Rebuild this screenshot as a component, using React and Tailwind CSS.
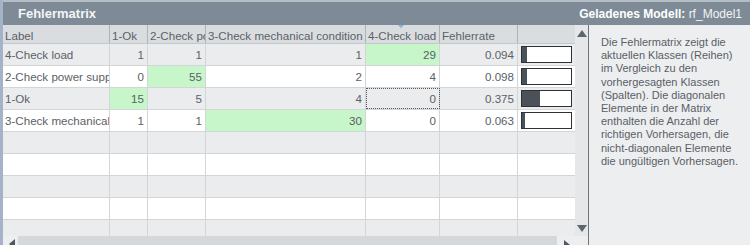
import React from "react";

const cols = [
  { w: "w-[107px]", label: "Label" },
  { w: "w-[38px]", label: "1-Ok" },
  { w: "w-[58px]", label: "2-Check power supply" },
  { w: "w-[160px]", label: "3-Check mechanical condition" },
  { w: "w-[74px]", label: "4-Check load" },
  { w: "w-[78px]", label: "Fehlerrate" },
  { w: "w-[57px]", label: "" },
];

const rows = [
  { label: "4-Check load", v: [1, 1, 1, 29], green: 3, rate: "0.094", r: 0.094 },
  { label: "2-Check power supply", v: [0, 55, 2, 4], green: 1, rate: "0.098", r: 0.098 },
  { label: "1-Ok", v: [15, 5, 4, 0], green: 0, rate: "0.375", r: 0.375, focus: 3 },
  { label: "3-Check mechanical condition", v: [1, 1, 30, 0], green: 2, rate: "0.063", r: 0.063 },
  null,
  null,
  null,
  null,
  null,
];

const lines = [
  "Die Fehlermatrix zeigt die",
  "aktuellen Klassen (Reihen)",
  "im Vergleich zu den",
  "vorhergesagten Klassen",
  "(Spalten). Die diagonalen",
  "Elemente in der Matrix",
  "enthalten die Anzahl der",
  "richtigen Vorhersagen, die",
  "nicht-diagonalen Elemente",
  "die ungültigen Vorhersagen.",
];

function Row({ row, i }) {
  const bg = i % 2 === 0 ? "bg-[#ebecee]" : "bg-white";
  return (
    <div className={`flex h-[22px] shrink-0 border-b border-[#d3d5d7] ${bg}`}>
      <div className={`${cols[0].w} h-full border-r border-[#d3d5d7] pl-[2px] overflow-hidden whitespace-nowrap leading-[22px]`}>
        {row ? row.label : ""}
      </div>
      {[0, 1, 2, 3].map((k) => (
        <div
          key={k}
          className={`${cols[k + 1].w} h-full border-r border-[#d3d5d7] pr-[3px] text-right leading-[22px] ${
            row && row.green === k ? "bg-[#c6f6c9]" : ""
          } ${row && row.focus === k ? "outline-1 outline-dotted outline-[#555] -outline-offset-1" : ""}`}
        >
          {row ? row.v[k] : ""}
        </div>
      ))}
      <div className={`${cols[5].w} h-full border-r border-[#d3d5d7] pr-[3px] text-right leading-[22px]`}>
        {row ? row.rate : ""}
      </div>
      <div className={`${cols[6].w} h-full flex items-center pl-[3px]`}>
        {row ? (
          <div className="w-[51px] h-[17px] border border-[#2e3236] bg-white flex">
            <div className="h-full bg-[#4a5158]" style={{ width: `${Math.max(2, row.r * 49)}px` }} />
          </div>
        ) : null}
      </div>
    </div>
  );
}

export default function App() {
  return (
    <div
      className="w-[750px] h-[245px] overflow-hidden flex bg-[#eceef0] text-[11px] text-[#5c6166]"
      style={{ fontFamily: '"Liberation Sans", Arial, sans-serif' }}
    >
      <div className="w-[3px] h-full bg-[#a3b3c8] shrink-0" />
      <div className="flex-1 flex flex-col">
        <div className="h-[2px] bg-[#b4bcc4] shrink-0" />
        <div className="h-[23px] shrink-0 bg-[#7e8b97] flex items-center justify-between pl-[15px] pr-[8px] text-white text-[12px]">
          <span className="font-bold text-[13px] text-[#f4f5f6]">Fehlermatrix</span>
          <span>
            <span className="font-bold">Geladenes Modell: </span>
            <span className="text-[#f2f4f6]">rf_Model1</span>
          </span>
        </div>
        <div className="flex flex-1 min-h-0">
          <div className="w-[585px] flex flex-col shrink-0">
            <div className="flex h-[211px] shrink-0">
              <div className="w-[572px] flex flex-col text-[11.6px]">
                <div className="flex h-[19px] shrink-0 bg-[#d9dde0] border-b border-[#c4c8cc]">
                  {cols.map((c, i) => (
                    <div
                      key={i}
                      className={`${c.w} h-full ${i < 6 ? "border-r border-[#aeb3b8]" : ""} pl-[2px] pt-[1px] overflow-hidden whitespace-nowrap leading-[19px] relative`}
                    >
                      {c.label}
                      {i === 4 ? (
                        <span className="absolute left-[32px] top-0 w-0 h-0 border-l-[3px] border-r-[3px] border-t-[3px] border-l-transparent border-r-transparent border-t-[#7fb3e0]" />
                      ) : null}
                    </div>
                  ))}
                </div>
                <div className="flex flex-col overflow-hidden flex-1">
                  {rows.map((r, i) => (
                    <Row key={i} row={r} i={i} />
                  ))}
                </div>
              </div>
              <div className="w-[13px] h-full bg-[#e6e7e9] flex flex-col items-center justify-between pt-[5px] pb-[4px]">
                <span className="w-0 h-0 border-l-[5px] border-r-[5px] border-b-[7px] border-l-transparent border-r-transparent border-b-[#5d656d]" />
                <span className="w-0 h-0 border-l-[5px] border-r-[5px] border-t-[7px] border-l-transparent border-r-transparent border-t-[#5d656d]" />
              </div>
            </div>
            <div className="h-[15px] shrink-0 flex items-start bg-[#eceef0]">
              <div className="w-[15px] pt-[3px] pl-[6px]">
                <span className="block w-0 h-0 border-t-[5px] border-b-[5px] border-r-[6px] border-t-transparent border-b-transparent border-r-[#4f565d]" />
              </div>
              <div className="w-[539px] h-full bg-[#d4d8db]" />
              <div className="pt-[4px] pl-[7px]">
                <span className="block w-0 h-0 border-t-[5px] border-b-[5px] border-l-[6px] border-t-transparent border-b-transparent border-l-[#4f565d]" />
              </div>
            </div>
          </div>
          <div className="w-[1px] bg-[#6c757e] shrink-0" />
          <div className="flex-1 pl-[12px] pt-[11px] leading-[13.2px] text-[11px] text-[#5a5f66]">
            {lines.map((l, i) => (
              <div key={i} className="whitespace-nowrap">
                {l}
              </div>
            ))}
          </div>
        </div>
      </div>
    </div>
  );
}
